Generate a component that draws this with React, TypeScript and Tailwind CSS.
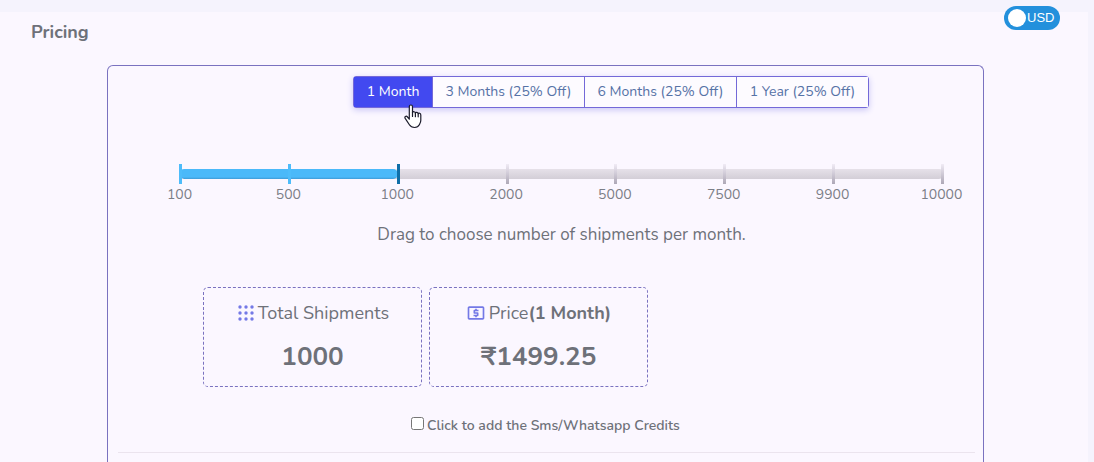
import { useState } from "react";
import { MdLocalAtm } from "react-icons/md";

interface Plan {
  id: string;
  label: string;
  width: string;
}

const plans: Plan[] = [
  { id: "1m", label: "1 Month", width: "w-[79px]" },
  { id: "3m", label: "3 Months (25% Off)", width: "w-[152px]" },
  { id: "6m", label: "6 Months (25% Off)", width: "w-[152px]" },
  { id: "1y", label: "1 Year (25% Off)", width: "w-[131px]" },
];

const steps = [100, 500, 1000, 2000, 5000, 7500, 9900, 10000];

function DotsIcon() {
  return (
    <svg width="16" height="16" viewBox="0 0 16 16" fill="#7479e6" aria-hidden="true">
      {[2, 8, 14].map((y) =>
        [2, 8, 14].map((x) => <circle key={`${x}-${y}`} cx={x} cy={y} r="1.7" />)
      )}
    </svg>
  );
}

function HandPointer() {
  return (
    <svg
      className="absolute top-[27px] left-[50px] z-10 pointer-events-none"
      width="18"
      height="25"
      viewBox="0 0 18 25"
      aria-hidden="true"
    >
      <path
        d="M5.3 15.2V2.7c0-2.3 3.2-2.3 3.2 0v6c.3-1.4 2.8-1.3 2.9.4.5-1.2 2.7-1 2.8.7.5-1 2.6-.8 2.6 1.2v5.2c0 2.2-.8 3.2-1.5 4.6-.9 1.8-2.4 2.7-4.7 2.7-2.6 0-4-.8-5.2-2.7L1.2 14.4c-1-1.9 1-2.9 2.3-1.4z"
        fill="#fff"
        stroke="#1b1b2b"
        strokeWidth="1.2"
        strokeLinejoin="round"
      />
      <path d="M8.5 8.5v4M11.4 9v3.7M14.2 9.8v3" stroke="#1b1b2b" strokeWidth="1.2" strokeLinecap="round" />
    </svg>
  );
}

function ShipmentSlider({ step, onChange }: { step: number; onChange: (n: number) => void }) {
  const pct = (step / (steps.length - 1)) * 100;

  return (
    <div>
      <div className="grid items-center">
        <div className="[grid-area:1/1] h-[10px] rounded-md bg-linear-to-b from-[#e6e1e9] to-[#d3ced7] overflow-hidden">
          <div
            className="h-full rounded-md bg-linear-to-b from-[#4ab9f9] from-80% to-[#3d9ad6]"
            style={{ width: `${pct}%` }}
          />
        </div>
        <div className="[grid-area:1/1] flex justify-between">
          {steps.map((s, i) => (
            <span
              key={s}
              className={
                i <= step
                  ? "w-[3px] h-5 bg-[#4dbcfa]"
                  : "w-[3px] h-5 bg-linear-to-b from-[#f0ebf5] to-[#aea8b7]"
              }
            />
          ))}
        </div>
        <input
          type="range"
          aria-label="Number of shipments per month"
          min={0}
          max={steps.length - 1}
          value={step}
          onChange={(e) => onChange(Number(e.target.value))}
          className="[grid-area:1/1] z-10 w-full h-5 appearance-none bg-transparent cursor-pointer [&::-webkit-slider-thumb]:appearance-none [&::-webkit-slider-thumb]:w-[3px] [&::-webkit-slider-thumb]:h-5 [&::-webkit-slider-thumb]:bg-[#0f6fa8]"
        />
      </div>
      <div className="mt-px mr-[2px] flex justify-between text-sm leading-5 text-[#7b7e87]">
        {steps.map((s) => (
          <span key={s} className="w-px flex justify-center">
            {s}
          </span>
        ))}
      </div>
    </div>
  );
}

export default function App() {
  const [plan, setPlan] = useState("1m");
  const [step, setStep] = useState(2);
  const [credits, setCredits] = useState(false);
  const [usd, setUsd] = useState(true);

  return (
    <div className="min-h-screen flex flex-col bg-[#f5f3fd] pt-3 pr-[6px] font-['Nunito','Lato',sans-serif] text-[#6e7179]">
      <main className="flex-1 flex flex-col bg-[#fbf7ff]">
        <header className="flex items-start justify-between pl-[31px] pr-7">
          <h1 className="pt-2 text-lg leading-6 font-bold">Pricing</h1>
          <button
            onClick={() => setUsd(!usd)}
            className="-mt-[6px] w-14 h-6 rounded-full bg-[#2390dc] flex items-center gap-px pl-1 text-white text-[13px] font-['Liberation_Sans',sans-serif]"
          >
            <span className="w-[18px] h-[18px] rounded-full bg-white" />
            {usd ? "USD" : "INR"}
          </button>
        </header>

        <section className="flex-1 mt-[21px] ml-[107px] mr-[104px] border border-b-0 border-[#7a72c0] rounded-t-md pt-[10px]">
          {/* Plan duration */}
          <div className="flex justify-center pl-[131px]">
            <div className="relative flex border border-[#7469d8] rounded-[3px] shadow-[0_2px_6px_#c9c6f5]">
              <HandPointer />
              {plans.map((p) => (
                <button
                  key={p.id}
                  onClick={() => setPlan(p.id)}
                  className={`${p.width} h-[30px] text-sm whitespace-nowrap border-r border-[#7469d8] last:border-r-0 ${
                    plan === p.id ? "bg-[#4249f0] text-white" : "bg-[#fdfbff] text-[#5672a6]"
                  }`}
                >
                  {p.label}
                </button>
              ))}
            </div>
          </div>

          <div className="mt-14 pl-[71px] pr-[39px]">
            <ShipmentSlider step={step} onChange={setStep} />
            <p className="mt-[18px] text-center text-[17px] leading-6">
              Drag to choose number of shipments per month.
            </p>
          </div>

          {/* Totals */}
          <div className="mt-10 pl-[95px] pr-[109px] grid grid-cols-3 gap-[7px]">
            <div className="h-[100px] border border-dashed border-[#7a72c0] rounded-[5px] text-center pt-[13px]">
              <h2 className="flex items-center justify-center gap-1 pl-[2px] text-lg leading-6">
                <DotsIcon />
                Total Shipments
              </h2>
              <p className="mt-4 text-[26px] leading-8 font-bold">{steps[step]}</p>
            </div>
            <div className="h-[100px] border border-dashed border-[#7a72c0] rounded-[5px] text-center pt-[13px]">
              <h2 className="flex items-center justify-center text-lg leading-6">
                <MdLocalAtm size={20} color="#7479e6" className="mr-[3px]" />
                Price<b>(1 Month)</b>
              </h2>
              <p className="mt-4 text-[26px] leading-8 font-bold">₹1499.25</p>
            </div>
          </div>

          <label className="mt-[29px] flex items-start justify-center gap-[3px] text-sm leading-5 font-semibold">
            <input
              type="checkbox"
              checked={credits}
              onChange={(e) => setCredits(e.target.checked)}
              className="mt-px w-[13px] h-[13px]"
            />
            Click to add the Sms/Whatsapp Credits
          </label>

          <hr className="mt-4 ml-[10px] mr-2 border-[#ebe4ee]" />
        </section>
      </main>
    </div>
  );
}
